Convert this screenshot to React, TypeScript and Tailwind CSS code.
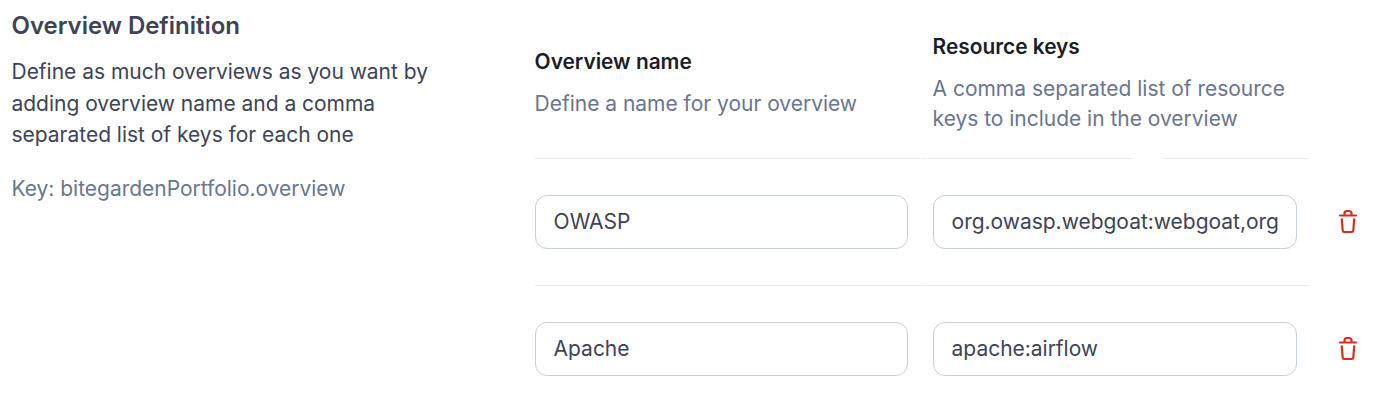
import React from "react";

const Trash = () => (
  <svg width="20" height="26" viewBox="0 0 20 26" fill="none" stroke="#dc2c1e" strokeWidth="2.2" strokeLinejoin="round" strokeLinecap="round">
    <path d="M2 6.500H18M6.500 6.500V4.500Q6.500 2 9 2H11Q13.500 2 13.500 4.500V6.500M3.800 10.300L4.700 21.500Q4.800 23 6.500 23H13.500Q15.200 23 15.300 21.500L16.200 10.300" />
  </svg>
);

const Row = ({ name, keys }: { name: string; keys: string }) => (
  <div className="flex h-[125px] items-center">
    <div className="mr-[25px] flex h-[54px] w-[373px] items-center rounded-[12px] border border-[#c5cdde] pl-[18px]">{name}</div>
    <div className="flex h-[54px] w-[364px] items-center rounded-[12px] border border-[#c5cdde] pl-[18px]">
      <span className="whitespace-nowrap">{keys}</span>
    </div>
    <button className="ml-[41px]"><Trash /></button>
  </div>
);

export default function App() {
  return (
    <main className="flex h-[400px] w-[1384px] overflow-hidden bg-white font-['Inter',sans-serif] text-[21px] font-[380] tracking-[-0.02px] text-[#3e4357]">
      <section className="w-[534.600px] pl-[11.500px] pt-[10px]">
        <h1 className="text-[24px] leading-8 font-semibold">Overview Definition</h1>
        <p className="mt-[14px] w-[430px] leading-[31.500px]">Define as much overviews as you want by<br />adding overview name and a comma<br />separated list of keys for each one</p>
        <p className="mt-[22px] leading-[32px] text-[#6a7590]">Key: bitegardenPortfolio.overview</p>
      </section>
      <section>
        <header className="flex h-[158px]">
          <div className="w-[398px] pt-[46px]">
            <h2 className="text-[20.900px] font-semibold leading-8 text-[#1b1d29]">Overview name</h2>
            <p className="mt-[11px] leading-[30px] text-[#6a7590]">Define a name for your overview</p>
          </div>
          <div className="pt-[31px]">
            <h2 className="text-[20.900px] font-semibold leading-8 text-[#1b1d29]">Resource keys</h2>
            <p className="mt-[11px] leading-[30px] text-[#6a7590]">A comma separated list of resource<br />keys to include in the overview</p>
          </div>
        </header>
        <div className="flex h-px"><i className="mr-px w-[385px] bg-[#ebebeb]" /><i className="mr-[29px] w-[212px] bg-[#ebebeb]" /><i className="w-[146px] bg-[#ebebeb]" /></div>
        <div className="h-[126px]"><Row name="OWASP" keys="org.owasp.webgoat:webgoat,org" /></div>
        <div className="flex h-px gap-px"><i className="w-[385px] bg-[#ebebeb]" /><i className="w-[388px] bg-[#ebebeb]" /></div>
        <Row name="Apache" keys="apache:airflow" />
      </section>
    </main>
  );
}
